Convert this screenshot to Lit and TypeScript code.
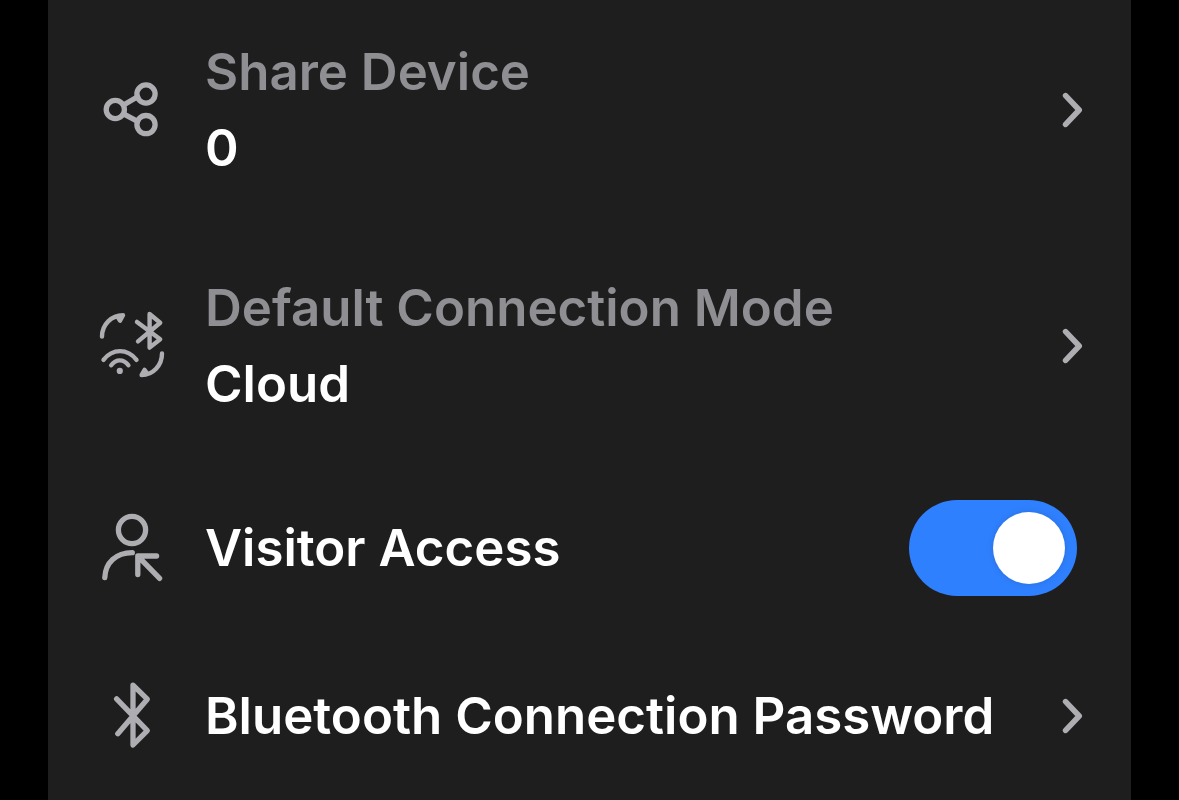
import { LitElement, html, svg, css } from "lit";
import { customElement, state } from "lit/decorators.js";

const shareIcon = svg`
  <circle cx="19.3" cy="35.5" r="9.1" />
  <circle cx="50" cy="20" r="9.1" />
  <circle cx="50" cy="50.6" r="9.1" />
  <path d="M28 30.8 41.6 22.8M28 40.2 41.6 47.4" />`;

const modeIcon = svg`
  <g stroke-width="4.4">
    <path d="M6 26.5C6 14.5 15.5 5.2 27 5.2L24 10.6 22 7.4 26 5.6" />
    <path d="M66 43.5C66 55.5 57 65.1 45.6 65.1L48.6 59.9 50.6 62.8 46.6 64.7" />
    <path d="M41 11.9 64.2 29.2 53.6 37.6V4L64.2 12.8 42 31.4" />
    <path d="M7.5 49.8C16.5 38.2 31.5 38.2 40.5 49.8" />
    <path d="M15.2 55.2C20 48.8 27.6 48.8 32.4 55.2" />
  </g>
  <circle class="dot" cx="23.8" cy="60.9" r="3.1" />`;

const visitorIcon = svg`
  <circle cx="36" cy="18" r="13.6" />
  <path d="M8.8 65.6C9.4 50.5 20 40.9 36.3 40.7" />
  <path d="M60.6 44H41.8V62.6M42.6 44.8 63.6 66.4" />`;

const bluetoothIcon = svg`
  <path d="M20.6 18.8 51.3 50.6 37 65V5.2L51.3 19.2 21.8 53.8" />`;

const icon = (shape: unknown) => html`
  <svg class="icon" viewBox="0 0 72 72" aria-hidden="true">${shape}</svg>`;

const chevron = html`
  <svg class="chevron" viewBox="0 0 24 36" aria-hidden="true">
    <path d="M6.6 3.6 20.2 18 6.6 32.4" />
  </svg>`;

@customElement("app-root")
export class AppRoot extends LitElement {
  static styles = css`
    :host {
      display: block;
      min-height: 100vh;
      box-sizing: border-box;
      padding: 0 48px;
      background: #000;
      color: #fff;
      font-family: Inter, "Noto Sans", sans-serif;
      font-size: 51px;
      font-weight: 560;
      line-height: 76px;
    }
    .panel {
      min-height: 100vh;
      background: #1e1e1e;
    }
    .row {
      display: flex;
      align-items: center;
      gap: 37px;
      width: 100%;
      box-sizing: border-box;
      margin: 0;
      border: 0;
      padding: 46px 48px;
      background: none;
      color: inherit;
      font: inherit;
      text-align: left;
      cursor: pointer;
    }
    .double {
      padding-block: 42px;
    }
    .first {
      padding-top: 34px;
    }
    .text {
      flex: 1;
      min-width: 0;
    }
    .caption,
    .value {
      display: block;
    }
    .caption {
      color: #8e8e93;
    }
    .icon,
    .chevron {
      flex: none;
      fill: none;
      stroke: #aeaeb2;
      stroke-width: 5.3;
      stroke-linecap: round;
      stroke-linejoin: round;
    }
    .icon {
      width: 72px;
      height: 72px;
    }
    .dot {
      fill: #aeaeb2;
      stroke: none;
    }
    .chevron {
      width: 24px;
      height: 36px;
      stroke-width: 5.6;
    }
    .single {
      min-height: 168px;
      padding-block: 36px;
    }
    .switch {
      appearance: none;
      flex: none;
      display: flex;
      align-items: center;
      width: 168px;
      height: 96px;
      box-sizing: border-box;
      margin: 0 6px 0 0;
      padding: 12px;
      border-radius: 48px;
      background: #48484a;
      cursor: pointer;
    }
    .switch::before {
      content: "";
      width: 72px;
      height: 72px;
      border-radius: 50%;
      background: #fff;
      box-shadow: 0 0 6px rgba(0, 0, 0, 0.15);
    }
    .switch:checked {
      justify-content: flex-end;
      background: #2f80ff;
    }
  `;

  @state() private visitorAccess = true;

  private toggleVisitor(event: Event) {
    this.visitorAccess = (event.target as HTMLInputElement).checked;
  }

  render() {
    return html`
      <main class="panel">
        <button class="row double first" type="button">
          ${icon(shareIcon)}
          <span class="text">
            <span class="caption">Share Device</span>
            <span class="value">0</span>
          </span>
          ${chevron}
        </button>
        <button class="row double" type="button">
          ${icon(modeIcon)}
          <span class="text">
            <span class="caption">Default Connection Mode</span>
            <span class="value">Cloud</span>
          </span>
          ${chevron}
        </button>
        <label class="row single" for="visitor">
          ${icon(visitorIcon)}
          <span class="text">Visitor Access</span>
          <input
            id="visitor"
            class="switch"
            type="checkbox"
            role="switch"
            .checked=${this.visitorAccess}
            @change=${this.toggleVisitor}
          />
        </label>
        <button class="row single" type="button">
          ${icon(bluetoothIcon)}
          <span class="text">Bluetooth Connection Password</span>
          ${chevron}
        </button>
      </main>
    `;
  }
}
